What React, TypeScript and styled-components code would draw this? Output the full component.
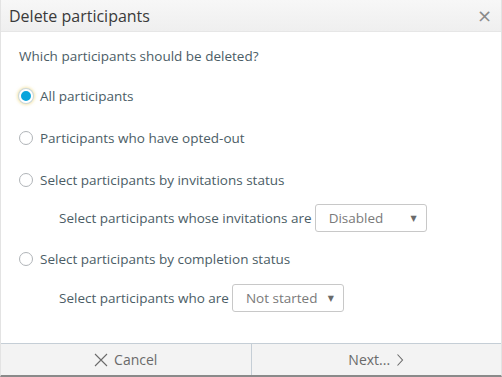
import React from 'react';
import styled, { createGlobalStyle } from 'styled-components';

const GlobalStyle = createGlobalStyle`
  html, body {
    margin: 0;
    padding: 0;
    background: #ffffff;
  }
  body {
    font-family: "Open Sans", Lato, "Liberation Sans", sans-serif;
  }
`;

const Dialog = styled.div`
  width: 502px;
  height: 377px;
  box-sizing: border-box;
  display: flex;
  flex-direction: column;
  border-left: 1px solid #e3e3e3;
  border-right: 1px solid #e3e3e3;
  border-bottom: 2px solid #8a8a8a;
  background: #fff;
`;

const Header = styled.div`
  height: 32px;
  box-sizing: border-box;
  display: flex;
  align-items: center;
  justify-content: space-between;
  padding: 1px 9px 0 8px;
  background: linear-gradient(#f7f7f7, #efefef);
  border-bottom: 1px solid #e6e6e6;
`;

const Title = styled.div`
  font-size: 16px;
  color: #3a3a3a;
`;

const Close = styled.div`
  font-size: 18px;
  color: #8a8a8a;
  line-height: 1;
  font-family: "DejaVu Sans", sans-serif;
`;

const Body = styled.div`
  flex: 1;
  padding: 16px 18px 0;
  color: #4b5d66;
  font-size: 13.5px;
`;

const Question = styled.div`
  height: 17px;
  line-height: 17px;
  margin-bottom: 22px;
`;

const Option = styled.label`
  display: flex;
  align-items: center;
  gap: 7px;
  height: 17px;
  margin-bottom: 25px;
`;

const Radio = styled.span<{ checked?: boolean }>`
  width: 14px;
  height: 14px;
  box-sizing: border-box;
  border-radius: 50%;
  flex: none;
  ${(p) =>
    p.checked
      ? `
    background: #0aa5dc;
    border: 2px solid #fff;
    box-shadow: 0 0 0 1px #c9d6dc, 0 0 3px 2px rgba(240, 220, 140, 0.7);
  `
      : `
    background: #fff;
    border: 1px solid #b0b4b8;
  `}
`;

const SubRow = styled.div<{ last?: boolean }>`
  display: flex;
  align-items: center;
  gap: 3px;
  padding-left: 40px;
  margin-top: ${(p) => (p.last ? '-8px' : '-9px')};
  margin-bottom: ${(p) => (p.last ? 0 : '18px')};
`;

const Select = styled.div<{ width: number }>`
  width: ${(p) => p.width}px;
  height: 28px;
  box-sizing: border-box;
  border: 1px solid #c8c8c8;
  border-radius: 3px;
  display: flex;
  align-items: center;
  justify-content: space-between;
  padding: 0 9px 0 13px;
  color: #7a7a7a;
  font-size: 13.5px;
`;

const Caret = styled.span`
  font-size: 8px;
  color: #6a6a6a;
  font-family: "DejaVu Sans", sans-serif;
`;

const Footer = styled.div`
  height: 31px;
  display: flex;
  border-top: 1px solid #c5ced6;
  background: #f3f3f3;
`;

const FooterButton = styled.div<{ divider?: boolean }>`
  flex: 1;
  display: flex;
  align-items: center;
  justify-content: center;
  gap: 6px;
  font-size: 14px;
  color: #6a6a6a;
  border-right: ${(p) => (p.divider ? '1px solid #c5ced6' : 'none')};
`;

const CrossIcon = () => (
  <svg width="14" height="14" viewBox="0 0 14 14">
    <path d="M1 1 L13 13 M13 1 L1 13" stroke="#6a6a6a" strokeWidth="1.1" fill="none" />
  </svg>
);

const ChevronIcon = () => (
  <svg width="8" height="14" viewBox="0 0 8 14">
    <path d="M1.5 1.5 L6.5 7 L1.5 12.5" stroke="#6a6a6a" strokeWidth="1.1" fill="none" />
  </svg>
);

const App: React.FC = () => {
  return (
    <>
      <GlobalStyle />
      <Dialog>
        <Header>
          <Title>Delete participants</Title>
          <Close>×</Close>
        </Header>
        <Body>
          <Question>Which participants should be deleted?</Question>
          <Option>
            <Radio checked />
            All participants
          </Option>
          <Option>
            <Radio />
            Participants who have opted-out
          </Option>
          <Option>
            <Radio />
            Select participants by invitations status
          </Option>
          <SubRow>
            Select participants whose invitations are
            <Select width={112}>
              Disabled
              <Caret>▼</Caret>
            </Select>
          </SubRow>
          <Option>
            <Radio />
            Select participants by completion status
          </Option>
          <SubRow last>
            Select participants who are
            <Select width={112}>
              Not started
              <Caret>▼</Caret>
            </Select>
          </SubRow>
        </Body>
        <Footer>
          <FooterButton divider>
            <CrossIcon />
            Cancel
          </FooterButton>
          <FooterButton>
            Next...
            <ChevronIcon />
          </FooterButton>
        </Footer>
      </Dialog>
    </>
  );
};

export default App;
